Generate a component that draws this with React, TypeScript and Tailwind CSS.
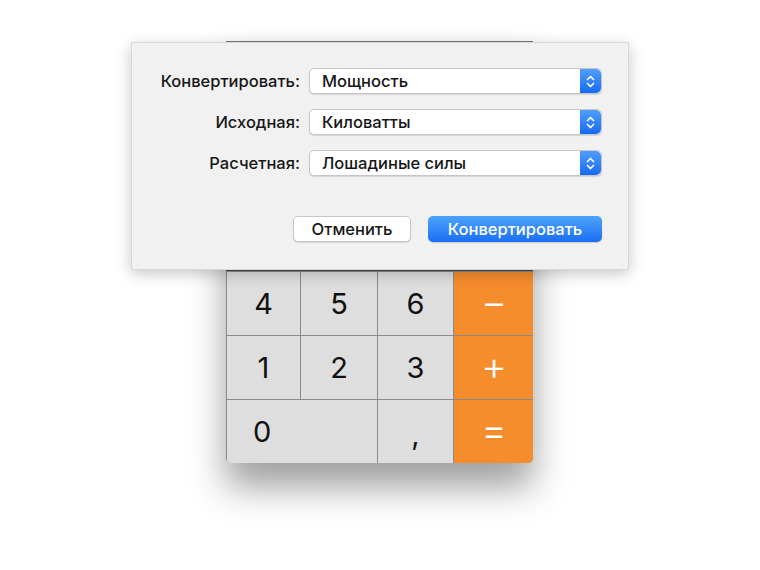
import { ReactNode } from "react";

const font = { fontFamily: "Inter, 'Liberation Sans', sans-serif" };

function Stepper() {
  return (
    <div className="w-[21px] h-full rounded-r-[5px] bg-gradient-to-b from-[#4f9efc] to-[#166af2] flex items-center justify-center">
      <svg width="9" height="15" viewBox="0 0 9 15" fill="none" stroke="white" strokeWidth="1.7" strokeLinecap="round" strokeLinejoin="round">
        <path d="M1.5 5.5 L4.5 2.5 L7.5 5.5" />
        <path d="M1.5 9.5 L4.5 12.5 L7.5 9.5" />
      </svg>
    </div>
  );
}

function Field({ label, value }: { label: string; value: string }) {
  return (
    <div className="flex items-center">
      <div className="w-[177px] pr-[9px] text-right text-[16.5px] font-medium text-[#161616]">{label}</div>
      <div className="w-[293px] h-[26px] flex bg-white border border-[#c6c6c6] rounded-[5px] shadow-[0_1px_1px_rgba(0,0,0,0.12)]">
        <div className="flex-1 pl-[12px] flex items-center text-[16.5px] font-medium text-[#161616]">{value}</div>
        <Stepper />
      </div>
    </div>
  );
}

function Key({ children, orange, wide, low }: { children: ReactNode; orange?: boolean; wide?: boolean; low?: boolean }) {
  return (
    <div
      className={`h-[63px] flex items-center ${wide ? "col-span-2 pl-[26px]" : "justify-center"} ${
        orange ? "bg-[#f68d2d] text-white text-[40px] font-light pb-[3px]" : "bg-[#dedede] text-[#111] text-[29px]"
      } ${low ? "pt-[6px]" : ""}`}
    >
      {children}
    </div>
  );
}

export default function App() {
  return (
    <div className="relative h-[570px] w-[760px] bg-white overflow-hidden" style={font}>
      {/* calculator window, mostly hidden behind the sheet */}
      <div className="ml-[226px] mt-[41px] w-[307px] rounded-b-[5px] bg-[#8a8a8a] shadow-[0_24px_36px_rgba(0,0,0,0.38)] overflow-hidden">
        <div className="h-[230px] bg-[#4b4b4b] border-t border-[#7a7a7a]" />
        <div className="grid grid-cols-[73px_76px_75px_80px] gap-px pl-px pt-px">
          <Key>4</Key>
          <Key>5</Key>
          <Key>6</Key>
          <Key orange>−</Key>
          <Key>1</Key>
          <Key>2</Key>
          <Key>3</Key>
          <Key orange>+</Key>
          <Key wide>0</Key>
          <Key low>,</Key>
          <Key orange>=</Key>
        </div>
      </div>

      {/* conversion sheet */}
      <div className="absolute left-[131px] top-[42px] w-[498px] h-[228px] bg-[#f1f1f1] border border-[#d8d8d8] shadow-[0_4px_14px_rgba(0,0,0,0.22)] flex flex-col pt-[25px]">
        <div className="flex flex-col gap-[15px]">
          <Field label="Конвертировать:" value="Мощность" />
          <Field label="Исходная:" value="Киловатты" />
          <Field label="Расчетная:" value="Лошадиные силы" />
        </div>
        <div className="mt-[40px] flex justify-end gap-[17px] pr-[26px]">
          <button className="w-[118px] h-[26px] rounded-[5px] bg-white border border-[#c6c6c6] shadow-[0_1px_1px_rgba(0,0,0,0.12)] text-[16.5px] font-medium text-[#161616]">
            Отменить
          </button>
          <button className="w-[174px] h-[26px] rounded-[5px] bg-gradient-to-b from-[#4ea2fc] to-[#1a6ef3] text-[16.5px] font-medium text-white shadow-[0_1px_1px_rgba(0,0,0,0.15)]">
            Конвертировать
          </button>
        </div>
      </div>
    </div>
  );
}
